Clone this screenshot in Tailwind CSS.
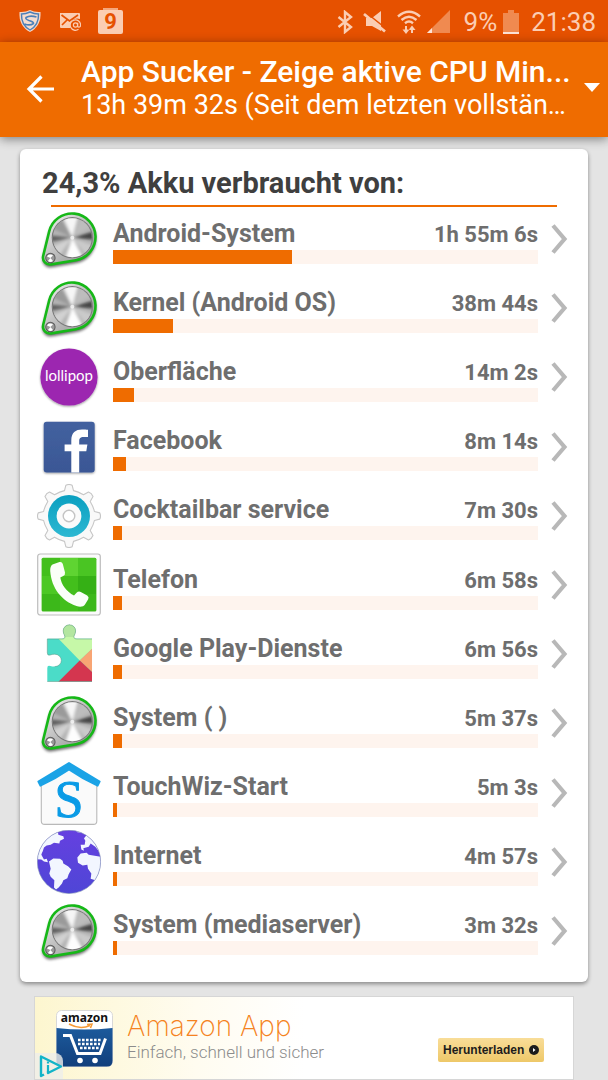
<!DOCTYPE html>
<html lang="de">
<head>
    <meta charset="UTF-8">
    <meta name="viewport" content="width=device-width, initial-scale=1.0">
    <title>App Sucker</title>
    <script src="https://cdn.jsdelivr.net/npm/@tailwindcss/browser@4"></script>
</head>
<body class="min-h-screen flex flex-col bg-[#e4e4e4] font-['Roboto',sans-serif]">

    <!-- App icons, used by the list below -->
    <svg class="absolute w-0 h-0" aria-hidden="true">
        <defs>
            <linearGradient id="plate" x1="0" y1="0" x2="1" y2="1">
                <stop offset="0" stop-color="#f4f4f4"/><stop offset="1" stop-color="#8a8a8a"/>
            </linearGradient>
            <linearGradient id="fbBlue" x1="0" y1="0" x2="0" y2="1">
                <stop offset="0" stop-color="#43619f"/><stop offset="1" stop-color="#3a5795"/>
            </linearGradient>
            <linearGradient id="gearBlue" x1="0" y1="0" x2="0" y2="1">
                <stop offset="0" stop-color="#0a9fc0"/><stop offset="1" stop-color="#2db8d2"/>
            </linearGradient>
            <linearGradient id="globeBlue" x1="0" y1="0" x2="0" y2="1">
                <stop offset="0" stop-color="#6540e0"/><stop offset="1" stop-color="#4f46d6"/>
            </linearGradient>
            <filter id="soft" x="-20%" y="-20%" width="140%" height="140%"><feGaussianBlur stdDeviation="1.8"/></filter>
            <filter id="drop" x="-20%" y="-20%" width="140%" height="140%"><feDropShadow dx="0" dy="1" stdDeviation="0.8" flood-opacity="0.4"/></filter>
            <clipPath id="disc"><circle cx="35.3" cy="30.7" r="19.5"/></clipPath>
            <clipPath id="globeClip"><circle cx="105" cy="107" r="95"/></clipPath>
        </defs>

        <symbol id="knob" viewBox="0 0 64 64">
            <path d="M12.2 24.4A23.5 23.5 0 1 1 38.9 53.2L14.2 57.4A7 7 0 0 1 6.2 48.8Z" transform="translate(0 2.5)" fill="#000" stroke="#000" opacity=".6" filter="url(#soft)"/>
            <path d="M12.2 24.4A23.5 23.5 0 1 1 38.9 53.2L14.2 57.4A7 7 0 0 1 6.2 48.8Z" fill="url(#plate)" stroke="#16b818" stroke-width="2.6"/>
            <circle cx="35.3" cy="30.7" r="20.6" fill="#7a7a7a"/>
            <g clip-path="url(#disc)">
                <rect x="14" y="10" width="43" height="43" fill="#b4b4b4"/>
                <g filter="url(#soft)">
                    <path d="M35.3 30.7L24 6H42Z" fill="#f6f6f6"/>
                    <path d="M35.3 30.7L8 18V12L22 8Z" fill="#9a9a9a"/>
                    <path d="M35.3 30.7L8 28V36Z" fill="#5e5e5e"/>
                    <path d="M35.3 30.7L62 23V33Z" fill="#444"/>
                    <path d="M35.3 30.7L46 6L60 16Z" fill="#bdbdbd"/>
                    <path d="M35.3 30.7L26 58H50Z" fill="#fdfdfd"/>
                    <path d="M35.3 30.7L60 40L54 54Z" fill="#cacaca"/>
                    <path d="M35.3 30.7L10 42L18 54Z" fill="#d2d2d2"/>
                </g>
                <circle cx="35.3" cy="30.7" r="2" fill="#fff" opacity=".7"/>
            </g>
            <circle cx="13.4" cy="51" r="5.2" fill="#5a5a5a"/>
            <circle cx="13.4" cy="51" r="4.2" fill="#999"/>
            <path d="M10 49.5A4 4 0 0 1 16 48.5L13.4 51ZM11 54A4 4 0 0 0 16 54L13.4 51Z" fill="#fff"/>
        </symbol>

        <symbol id="lollipop" viewBox="0 0 64 64">
            <circle cx="32" cy="32" r="28.6" fill="#9c27b0" filter="url(#drop)"/>
        </symbol>

        <symbol id="facebook" viewBox="0 0 64 64">
            <rect x="6.7" y="6.8" width="51" height="50.6" rx="3" fill="url(#fbBlue)" filter="url(#drop)"/>
            <path d="M34.3 57.4V36.3H27.6V29.6H34.3V25.4C34.3 17.6 38.6 14.4 45 14.4C47.4 14.4 49.6 14.5 51 14.8V22H46.6C43.2 22 42.2 23.6 42.2 26V29.6H50.4L49.3 36.3H42.2V57.4Z" fill="#fff"/>
        </symbol>

        <symbol id="gear" viewBox="0 0 64 64">
            <path d="M27.5 6.6L28.9 1.2Q32 -0.2 35.1 1.2L36.5 6.6Q41 7.5 46.5 10.8L51.5 8Q54.7 9.2 56 12.5L53.2 17.5Q56.5 23 57.4 27.5L62.8 28.9Q64.2 32 62.8 35.1L57.4 36.5Q56.5 41 53.2 46.5L56 51.5Q54.7 54.8 51.5 56L46.5 53.2Q41 56.5 36.5 57.4L35.1 62.8Q32 64.2 28.9 62.8L27.5 57.4Q23 56.5 17.5 53.2L12.5 56Q9.3 54.8 8 51.5L10.8 46.5Q7.5 41 6.6 36.5L1.2 35.1Q-0.2 32 1.2 28.9L6.6 27.5Q7.5 23 10.8 17.5L8 12.5Q9.3 9.2 12.5 8L17.5 10.8Q23 7.5 27.5 6.6Z" fill="#f9f9f9" stroke="#c6c6c6" stroke-width="1.1" stroke-linejoin="round"/>
            <circle cx="32" cy="32" r="21" fill="url(#gearBlue)"/>
            <circle cx="32" cy="32" r="12.4" fill="#fafafa"/>
            <circle cx="32" cy="32" r="5.8" fill="#fff" stroke="#c4c4c4" stroke-width="1.4"/>
        </symbol>

        <symbol id="phone" viewBox="0 0 64 64">
            <rect x=".7" y="1" width="62.6" height="61" rx="2.5" fill="#fbfbfb" stroke="#bdbdbd" stroke-width="1.2"/>
            <rect x="4.6" y="4.8" width="54.8" height="53.6" rx="1.5" fill="#43bf1c"/>
            <path d="M23 5H41V23H23Z" fill="#5fd432"/>
            <path d="M5 23H23V41H5Z" fill="#4cc824"/>
            <path d="M41 23H59V41H41Z" fill="#35b015"/>
            <path d="M41 5H59V23H41Z" fill="#4ac523"/>
            <path d="M5 41H23V58H5ZM41 41H59V58H41Z" fill="#3cb81a"/>
            <path d="M15.5 11.5L22.5 9Q25 8.4 25.8 11L28 19.5Q28.4 22 26.2 23L23.3 24.5C24.5 32 29.5 38.5 37 42.5L39.8 39.5Q41.6 38 43.8 39L50.2 42.5Q52.4 44 51.2 46.2L48 51.5C46.5 53.8 43 54.2 39.5 53C25 48 14.5 35.5 13.2 18Q13 13 15.5 11.5Z" fill="#fafff8"/>
        </symbol>

        <symbol id="puzzle" viewBox="0 0 64 64">
            <clipPath id="piece">
                <path d="M10.3 16.8H25Q28.5 16.8 27.8 14Q26.2 11.5 26.2 8.8A6.2 6 0 0 1 38.600 8.800Q38.600 11.500 37 14Q36.300 16.800 39.800 16.800H55V59.500H10.300V46Q10.300 43 13.300 44Q15 44.600 17.700 44.600A6.400 6 0 0 0 17.700 32.200Q15 32.200 13.300 33Q10.300 34 10.300 31Z"/>
            </clipPath>
            <g clip-path="url(#piece)">
                <rect x="10" y="2" width="46" height="58" fill="#4bdcc8"/>
                <path d="M20 2H56V26L42.7 38.5L21.5 16.8Z" fill="#c6f8a8"/>
                <path d="M24 2H41V15H24Z" fill="#b3e6a0"/>
                <path d="M55 26.8V50L42.7 38.5Z" fill="#f8a574"/>
                <path d="M42.7 38.5L55 50V60H21.2Z" fill="#d4364f"/>
            </g>
            <path d="M10.3 31V17H25Q28.5 16.8 27.8 14Q26.2 11.5 26.2 8.8A6.2 6 0 0 1 38.6 8.8Q38.6 11.5 37 14Q36.3 16.8 39.8 17H55M17.7 44.6A6.4 6 0 0 0 17.7 32.2Q15 32.2 13.3 33Q10.3 34 10.3 31M10.3 59.5H55" fill="none" stroke="#5b8f7d" stroke-opacity=".6" stroke-width=".8"/>
        </symbol>

        <symbol id="home" viewBox="0 0 64 64">
            <path d="M4.3 24L32 6L59.8 24V60Q59.8 63.4 56.4 63.4H7.7Q4.3 63.4 4.3 60Z" fill="#fafafa" stroke="#b9b9b9" stroke-width="1.1"/>
            <path d="M32 2L1.4 20.6L3.4 24.6Q18 18 32 8.4Q46 18 60.6 24.6L62.6 20.6Z" fill="#1ba3e6" stroke="#1ba3e6" stroke-width="2" stroke-linejoin="round"/>
        </symbol>

        <symbol id="globe" viewBox="0 0 64 64">
            <g transform="translate(-3 -3.8) scale(.3333)">
                <circle cx="105" cy="107" r="95" fill="url(#globeBlue)"/>
                <g clip-path="url(#globeClip)" fill="#f2f6ff">
                    <path d="M0 98V0H74L72 18L73 26L88 30L90 38L78 44L76 52L60 50L50 56L38 58L30 64L26 76L24 80L22 86L30 100L38 98L42 108L30 106L22 100Z"/>
                    <path d="M45 106L58 97L78 98L86 104L88 112L102 120L112 130L104 144L100 156L88 162L84 172L74 184L66 190L60 184L61 162L50 152L46 142L50 128Z"/>
                    <path d="M158 0H210V110L196 170L184 162L170 158L172 142L162 128L160 116L146 118L132 110L130 94L140 82L158 80L164 86L200 92L198 80L184 62L170 52L164 62L148 66L150 74L142 70L140 56L152 56L154 44L150 36L160 24Z"/>
                    <path d="M118 0H160L146 20L130 18Z"/>
                </g>
                <circle cx="105" cy="107" r="95" fill="none" stroke="#7d8fb5" stroke-opacity=".6" stroke-width="3"/>
            </g>
        </symbol>

        <symbol id="chevron" viewBox="0 0 18 32">
            <path d="M3 2.5L14.5 16L3 29.5" fill="none" stroke="#b8b8b8" stroke-width="4.2"/>
        </symbol>
    </svg>

    <!-- Status bar -->
    <div class="flex items-center justify-between h-[42px] pl-[18px] pr-3 bg-[#e65100] text-[#fbcdb3]">
        <div class="flex items-center gap-[17px]">
            <svg class="w-6 h-6" viewBox="0 0 24 24">
                <path d="M12 1Q16.5 3.5 22.5 3Q23.5 17 12 23Q.5 17 1.5 3Q7.5 3.5 12 1Z" fill="#f5d5c4"/>
                <path d="M12 3Q16 5 20.5 5Q21 16 12 21Q3 16 3.5 5Q8 5 12 3Z" fill="#f5ddd0" stroke="#4d80b8" stroke-width="1.4"/>
                <path d="M18.5 8Q12 6 8 8.5Q7 10 11 11.5Q16 13 15.5 14.5Q12 17 6.5 15" fill="none" stroke="#4d80b8" stroke-width="1.6"/>
            </svg>
            <svg class="w-[22px] h-5" viewBox="0 0 22 20">
                <path d="M1 2H20Q21 2 21 3V8Q17 6.5 13.5 9Q11 11.5 11.3 17H2Q1 17 1 16Z" fill="#fbcdb3"/>
                <path d="M2.5 4L10.5 10L19 4M3 14L8 9" fill="none" stroke="#e65100" stroke-width="1.7"/>
                <circle cx="16.5" cy="14" r="5" fill="#e65100"/>
                <path d="M19.5 18.3A5.2 5.2 0 1 1 21.6 14Q21.5 16.3 19.8 16.2Q18.6 16 18.7 14.5V11.8M18.6 14A2.1 2.1 0 1 1 14.4 14A2.1 2.1 0 1 1 18.6 14" fill="none" stroke="#fbcdb3" stroke-width="1.2"/>
            </svg>
            <div class="relative flex items-center justify-center w-[25px] h-6 mt-[2px] rounded-xs bg-[#fbcdb3] text-[#e65100] text-[22px] leading-6 font-bold before:absolute before:-top-[2px] before:left-[5px] before:w-[15px] before:h-[2px] before:bg-[#f5a67c]">9</div>
        </div>
        <div class="flex items-center text-[26px] leading-8 pt-[2px]">
            <svg class="w-4 h-6 mr-2.5" viewBox="0 0 16 24">
                <path d="M1.5 7L14 17L8 22V2L14 7L1.5 17" fill="none" stroke="currentColor" stroke-width="2.4"/>
            </svg>
            <svg class="w-6 h-6 mr-2.5" viewBox="0 0 24 24">
                <path d="M3 8H9L18 1V21L9 16H3Z" fill="currentColor"/>
                <path d="M3 2.5L23 18.5" stroke="#e65100" stroke-width="1.6"/>
                <path d="M1 4L22 21.5" stroke="currentColor" stroke-width="2.8"/>
            </svg>
            <svg class="w-6 h-6 mr-1.5" viewBox="0 0 24 24" fill="none" stroke="currentColor">
                <path d="M1 6.5Q12 -3 23 6.5M4.5 10Q12 3.5 19.5 10M8 13.2Q12 10 16 13.2" stroke-width="2.4"/>
                <path d="M9 16V21.5M15 23V18" stroke-width="2"/>
                <path d="M5.5 19.5H12.5L9 24ZM11.5 20H18.5L15 15.5Z" fill="currentColor" stroke="none"/>
            </svg>
            <svg class="w-[23px] h-6 mr-3.5" viewBox="0 0 23 24">
                <path d="M23 0V23H0Z" fill="#f08a50"/>
                <path d="M5 18V23H0Z" fill="#fde3d5"/>
            </svg>
            <span>9%</span>
            <svg class="w-4 h-6 ml-1.5 mr-3" viewBox="0 0 16 24">
                <path d="M5 0H11V3H16V24H0V3H5Z" fill="#f08a50"/>
                <path d="M0 22H16V24H0Z" fill="#fde3d5"/>
            </svg>
            <span>21:38</span>
        </div>
    </div>

    <!-- Action bar -->
    <header class="relative flex items-center h-[95px] pb-1 pl-6 pr-2 bg-[#ef6c00] text-white shadow-[0_2px_10px_rgba(0,0,0,0.45)]">
        <button type="button" aria-label="Zurück" class="shrink-0 w-[57px]">
            <svg class="w-8 h-8" viewBox="0 0 32 32" fill="none" stroke="currentColor" stroke-width="3.2">
                <path d="M30 17H5M17.5 4.5L5 17L17.5 29.5"/>
            </svg>
        </button>
        <div class="flex-1 min-w-0 whitespace-nowrap">
            <h1 class="text-[30px] leading-[34px] font-medium">App Sucker - Zeige aktive CPU Min...</h1>
            <p class="text-[27px] leading-8">13h 39m 32s (Seit dem letzten vollstän…</p>
        </div>
        <button type="button" aria-label="Ansicht wählen" class="shrink-0">
            <svg class="w-4 h-[9px]" viewBox="0 0 16 9"><path d="M0 0H16L8 9Z" fill="currentColor"/></svg>
        </button>
    </header>

    <!-- Battery usage -->
    <main class="flex-1 flex flex-col mx-5 mt-3 pt-4 pb-3.5 rounded-md bg-white shadow-[0_2px_4px_rgba(0,0,0,0.4)]">
        <h2 class="pl-[22px] text-[29px] leading-9 font-bold text-[#3f3f3f]">24,3% Akku verbraucht von:</h2>
        <div class="h-[2px] mt-1 mx-[31px] bg-[#ef6c00]"></div>
        <ul id="usage" class="flex-1 flex flex-col pl-[17px] pr-5"></ul>
    </main>

    <!-- Ad banner -->
    <aside class="relative flex items-center h-[84px] mt-3.5 mx-[34px] pl-[21px] pr-[29px] border border-[#d6d6d6] bg-linear-to-r from-[#fdf6cf] via-[#fffcf0] via-30% to-white to-50%">
        <svg class="shrink-0 w-[57px] h-[57px]" viewBox="0 0 57 57">
            <defs>
                <linearGradient id="adBlue" x1="0" y1="0" x2="0" y2="1"><stop offset="0" stop-color="#1c5a9c"/><stop offset="1" stop-color="#123f7c"/></linearGradient>
            </defs>
            <rect x=".5" y=".5" width="56" height="56" rx="5" fill="#fff" stroke="#d8d8d8"/>
            <path d="M.5 18Q28 21 56.5 18V51Q56.5 56.5 51 56.5H6Q.5 56.5 .5 51Z" fill="url(#adBlue)"/>
            <text x="28.5" y="12" text-anchor="middle" font-family="Noto Sans, sans-serif" font-weight="700" font-size="12" fill="#111">amazon</text>
            <path d="M13 14Q24 20 34 15.5M31 14.5L36 14L34.5 18" fill="none" stroke="#f79a35" stroke-width="1.5"/>
            <path d="M7 25.5H14.5L21.5 43.5H44L49.5 28.5" fill="none" stroke="#fff" stroke-width="3"/>
            <path d="M22 30H45M22 34H44M24 38H43" stroke="#fff" stroke-width="2.6" stroke-dasharray="2.6 1.4"/>
            <circle cx="24" cy="50.5" r="2.8" fill="#fff"/><circle cx="39" cy="50.5" r="2.8" fill="#fff"/>
        </svg>
        <div class="flex-1 pl-3.5 pb-1 whitespace-nowrap">
            <p class="text-[28px] leading-8 font-extralight font-['Inter',sans-serif] text-[#f58220]">Amazon App</p>
            <p class="text-[17px] leading-5 font-light text-[#8c8c8c]">Einfach, schnell und sicher</p>
        </div>
        <button type="button" class="shrink-0 flex items-center justify-between w-[106px] h-6 mt-6 px-[5px] rounded-xs bg-linear-to-b from-[#f9dd98] to-[#eec868] text-[12px] leading-4 font-bold font-['Liberation_Sans',sans-serif] text-[#1c1c1c]">
            Herunterladen
            <svg class="w-2.5 h-2.5" viewBox="0 0 10 10"><circle cx="5" cy="5" r="5" fill="#1c1c1c"/><path d="M4 3L6.5 5L4 7Z" fill="#fff"/></svg>
        </button>
        <a href="#" aria-label="Anzeigenvorgaben" class="absolute left-0 bottom-0 w-[28px] h-[26px] rounded-tr-lg bg-[#eeeeea]/80">
            <svg class="w-full h-full" viewBox="0 0 28 26">
                <path d="M9 21.5L6 23V3.5L26 13.5L13 20V18.5" fill="none" stroke="#12b4c8" stroke-width="2.4" stroke-linejoin="round"/>
                <path d="M13 8.5V10.5M13 12V19" stroke="#12b4c8" stroke-width="2.2"/>
            </svg>
        </a>
    </aside>

    <script>
// glyph is lettering drawn on top of the icon
const apps = [
    { icon: 'knob', name: 'Android-System', time: '1h 55m 6s', percent: 42 },
    { icon: 'knob', name: 'Kernel (Android OS)', time: '38m 44s', percent: 14 },
    { icon: 'lollipop', name: 'Oberfläche', time: '14m 2s', percent: 5,
      glyph: '<text x="32" y="36" text-anchor="middle" font-family="Lato, sans-serif" font-weight="400" font-size="15" fill="#fff">lollipop</text>' },
    { icon: 'facebook', name: 'Facebook', time: '8m 14s', percent: 3 },
    { icon: 'gear', name: 'Cocktailbar service', time: '7m 30s', percent: 2 },
    { icon: 'phone', name: 'Telefon', time: '6m 58s', percent: 2 },
    { icon: 'puzzle', name: 'Google Play-Dienste', time: '6m 56s', percent: 2 },
    { icon: 'knob', name: 'System ( )', time: '5m 37s', percent: 2 },
    { icon: 'home', name: 'TouchWiz-Start', time: '5m 3s', percent: 1,
      glyph: '<text x="32" y="56" text-anchor="middle" font-family="Liberation Serif, serif" font-weight="400" font-size="52" fill="#0a9be6" stroke="#0a9be6">S</text>' },
    { icon: 'globe', name: 'Internet', time: '4m 57s', percent: 1 },
    { icon: 'knob', name: 'System (mediaserver)', time: '3m 32s', percent: 1 },
];

// One row per app, the bar shows its share of the usage
document.getElementById('usage').innerHTML = apps.map(app => `
    <li class="flex-1 flex">
        <a href="#" class="flex-1 flex items-center pb-[5px] text-[#6e6e6e] font-bold">
            <svg class="shrink-0 w-16 h-16 overflow-visible" viewBox="0 0 64 64" aria-hidden="true"><use href="#${app.icon}"/>${app.glyph || ''}</svg>
            <div class="flex-1 mx-3">
                <div class="flex items-baseline justify-between pt-1 leading-[30px]">
                    <span class="text-[25px]">${app.name}</span>
                    <span class="text-[22px]">${app.time}</span>
                </div>
                <div class="h-3.5 bg-[#fef4ee]">
                    <div class="h-full bg-[#ef6c00]" style="width: ${app.percent}%"></div>
                </div>
            </div>
            <svg class="shrink-0 w-[18px] h-8" aria-hidden="true"><use href="#chevron"/></svg>
        </a>
    </li>`).join('');
    </script>
</body>
</html>
